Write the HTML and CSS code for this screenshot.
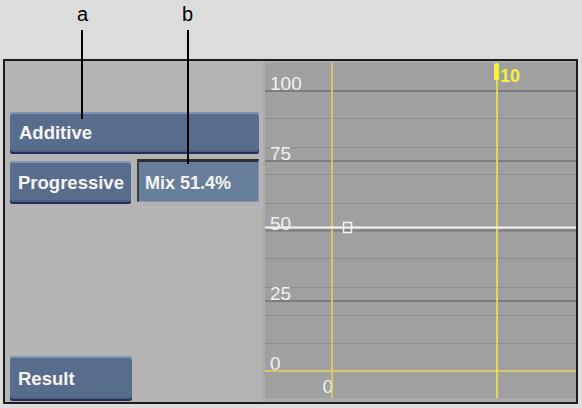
FILE: index.html
```html
<!DOCTYPE html>
<html>
<head>
<meta charset="utf-8">
<link rel="stylesheet" href="styles.css">
</head>
<body>
<div class="callouts">
  <span class="callout-label label-a">a</span>
  <span class="callout-label label-b">b</span>
  <span class="leader leader-a"></span>
  <span class="leader leader-b"></span>
</div>
<div class="frame">
  <div class="side">
    <div class="btn btn-wide">Additive</div>
    <div class="row">
      <div class="btn btn-prog">Progressive</div>
      <div class="field">Mix 51.4%</div>
    </div>
    <div class="btn btn-result">Result</div>
  </div>
  <div class="graph-wrap">
    <svg class="graph" width="311" height="335" viewBox="0 0 311 335">
      <rect width="311" height="335" fill="#a0a0a0"/>
      <g stroke="#8d8d8d" stroke-width="1">
        <line x1="0" x2="311" y1="55.5" y2="55.5"/>
        <line x1="0" x2="311" y1="84.5" y2="84.5"/>
        <line x1="0" x2="311" y1="111.5" y2="111.5"/>
        <line x1="0" x2="311" y1="140.5" y2="140.5"/>
        <line x1="0" x2="311" y1="195.5" y2="195.5"/>
        <line x1="0" x2="311" y1="224.5" y2="224.5"/>
        <line x1="0" x2="311" y1="252.5" y2="252.5"/>
        <line x1="0" x2="311" y1="280.5" y2="280.5"/>
      </g>
      <g stroke="#7d7d7d" stroke-width="2">
        <line x1="0" x2="311" y1="28" y2="28"/>
        <line x1="0" x2="311" y1="98" y2="98"/>
        <line x1="0" x2="311" y1="167.5" y2="167.5"/>
        <line x1="0" x2="311" y1="238" y2="238"/>
      </g>
      <g class="axis-label" fill="#f0f0f0">
        <text x="5" y="27">100</text>
        <text x="5" y="97">75</text>
        <text x="5" y="166.5">50</text>
        <text x="5" y="237">25</text>
        <text x="5" y="307">0</text>
        <text x="57.5" y="330">0</text>
      </g>
      <line x1="0" x2="311" y1="308" y2="308" stroke="#e8d258" stroke-width="1.5"/>
      <line x1="67" x2="67" y1="0" y2="335" stroke="#e8d258" stroke-width="1.5"/>
      <line x1="232" x2="232" y1="0" y2="335" stroke="#f4ee3c" stroke-width="1.5"/>
      <line x1="0" x2="311" y1="164.5" y2="164.5" stroke="#f4f4f4" stroke-width="2"/>
      <rect x="78.5" y="159.5" width="8" height="10" fill="none" stroke="#f4f4f4" stroke-width="1.5"/>
      <rect x="229" y="0.5" width="5" height="16.5" rx="1" fill="#fbf43a"/>
      <text class="frame-num" x="235" y="19" fill="#f8f040">10</text>
    </svg>
  </div>
</div>
</body>
</html>
```

FILE: styles.css
```css
html, body {
  margin: 0;
  padding: 0;
}

body {
  background: #dcdcdc;
  width: 582px;
  height: 408px;
  position: relative;
  overflow: hidden;
  font-family: "Liberation Sans", Arial, sans-serif;
}

.callouts {
  position: absolute;
  left: 0;
  top: 0;
  width: 582px;
  height: 408px;
  pointer-events: none;
  z-index: 5;
}

.callout-label {
  position: absolute;
  font-family: "Liberation Sans", Arial, sans-serif;
  font-size: 20px;
  line-height: 20px;
  color: #000;
}

.label-a {
  left: 77px;
  top: 4px;
}

.label-b {
  left: 182px;
  top: 4px;
}

.leader {
  position: absolute;
  top: 30px;
  width: 2px;
  background: #000;
}

.leader-a {
  left: 81px;
  height: 89px;
}

.leader-b {
  left: 187px;
  height: 134px;
}

.frame {
  margin: 59px 0 0 3px;
  width: 575px;
  height: 345px;
  box-sizing: border-box;
  border: 2px solid #1c1c1c;
  background: #b4b4b4;
  display: flex;
}

.side {
  width: 258px;
  box-sizing: border-box;
  padding: 51px 4px 1px 5px;
  display: flex;
  flex-direction: column;
}

.btn {
  box-sizing: border-box;
  background: #586d8c;
  color: #f6f6f6;
  font-family: "Liberation Sans", Arial, sans-serif;
  font-weight: bold;
  font-size: 18.5px;
  display: flex;
  align-items: center;
  padding-left: 8px;
  border-radius: 3px;
  box-shadow: inset 0 2px 0 #8095b3, inset 0 -2px 0 #262c5e, inset 0 -4px 0 #4d6080;
}

.btn-wide {
  height: 42px;
  padding-left: 9px;
}

.row {
  display: flex;
  gap: 6px;
  margin-top: 5px;
  align-items: flex-start;
}

.btn-prog {
  width: 121px;
  height: 43px;
  margin-top: 2px;
}

.field {
  box-sizing: border-box;
  width: 122px;
  height: 43px;
  background: #687f9b;
  border-top: 3px solid #2f2f33;
  border-left: 2px solid #3c3f46;
  border-right: 1px solid #8595ab;
  border-bottom: 1px solid #8595ab;
  color: #f4f4f4;
  font-family: "Liberation Sans", Arial, sans-serif;
  font-weight: bold;
  font-size: 18px;
  display: flex;
  align-items: center;
  padding: 4px 0 0 6px;
}

.btn-result {
  margin-top: auto;
  width: 122px;
  height: 45px;
}

.graph-wrap {
  width: 313px;
  box-sizing: border-box;
  padding: 2px 0 4px 2px;
  background: #acacac;
}

.graph {
  display: block;
}

.axis-label {
  font-family: "Liberation Sans", Arial, sans-serif;
  font-size: 19px;
}

.frame-num {
  font-family: "Liberation Sans", Arial, sans-serif;
  font-weight: bold;
  font-size: 18px;
}
```
